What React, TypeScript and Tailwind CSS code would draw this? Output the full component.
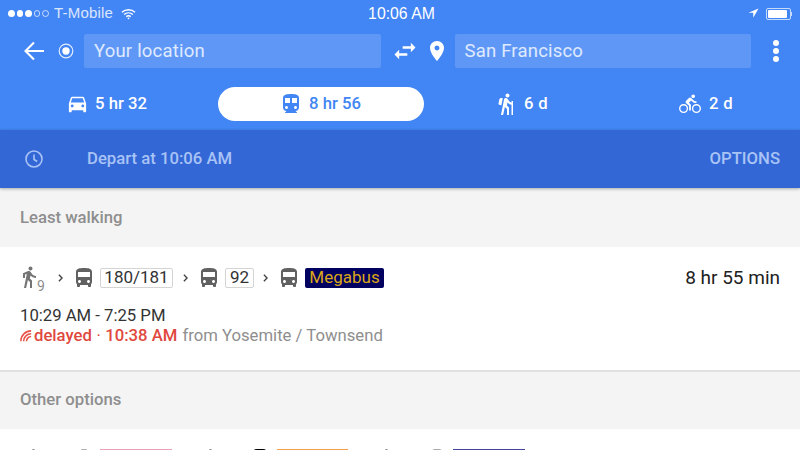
import type { ReactNode } from "react";

const BLUE = "#4285f4";

function Bus({ className = "" }: { className?: string }) {
  return (
    <svg viewBox="0 0 24 24" className={className} fill="currentColor">
      <path d="M4 16c0 .88.39 1.67 1 2.22V20c0 .55.45 1 1 1h1c.55 0 1-.45 1-1v-1h8v1c0 .55.45 1 1 1h1c.55 0 1-.45 1-1v-1.78c.61-.55 1-1.34 1-2.22V6c0-3.5-3.58-4-8-4s-8 .5-8 4v10zm3.5 1c-.83 0-1.5-.67-1.5-1.5S6.67 14 7.5 14s1.5.67 1.5 1.5S8.33 17 7.5 17zm9 0c-.83 0-1.5-.67-1.5-1.5s.67-1.5 1.5-1.5 1.5.67 1.5 1.5-.67 1.5-1.5 1.5zm1.5-6H6V6h12v5z" />
    </svg>
  );
}

function Chevron() {
  return (
    <svg viewBox="0 0 6 10" className="w-[5px] h-[8px] text-[#444]" fill="none" stroke="currentColor" strokeWidth="1.8">
      <path d="M1 1l4 4-4 4" />
    </svg>
  );
}

function Tag({ children, className = "" }: { children: ReactNode; className?: string }) {
  return (
    <span className={`h-[20px] flex items-center justify-center border border-[#d4d4d4] rounded-[2px] text-[17px] text-[#333] ${className}`}>
      {children}
    </span>
  );
}

function Signal() {
  return (
    <div className="flex items-center gap-[2px]">
      {[0, 1, 2].map((i) => (
        <span key={i} className="w-[6.5px] h-[6.5px] rounded-full bg-white" />
      ))}
      {[0, 1].map((i) => (
        <span key={i} className="w-[6.5px] h-[6.5px] rounded-full border border-white/70" />
      ))}
    </div>
  );
}

export default function App() {
  return (
    <div
      className="w-[800px] h-[450px] overflow-hidden bg-[#f4f4f4] flex flex-col"
      style={{ fontFamily: "Roboto, 'Liberation Sans', sans-serif" }}
    >
      <div className="bg-[#4285f4] h-[130px] shrink-0 flex flex-col text-white">
        {/* status bar */}
        <div className="h-[26px] pt-[1px] px-[8px] grid grid-cols-3 items-center text-[15px]" style={{ fontFamily: "'Liberation Sans', sans-serif" }}>
          <div className="flex items-center gap-[5.5px]">
            <Signal />
            <span className="text-white/80 tracking-[0.2px]">T-Mobile</span>
            <svg viewBox="0 0 16 12" className="w-[15px] h-[12px] ml-[2px]" fill="none" stroke="white" strokeWidth="1.5">
              <path d="M1 4.2c4-3.6 10-3.6 14 0M3.3 6.6c2.7-2.4 6.7-2.4 9.4 0M5.6 8.8c1.4-1.2 3.4-1.2 4.8 0" />
              <circle cx="8" cy="10.6" r="1" fill="white" stroke="none" />
            </svg>
          </div>
          <div className="text-center pl-[3px] text-[15.8px]">10:06 AM</div>
          <div className="flex items-center justify-end gap-[7px]">
            <svg viewBox="0 0 12 12" className="w-[11px] h-[11px]" fill="white">
              <path d="M11.5.5L.5 5.3h5.2v5.2z" />
            </svg>
            <div className="flex items-center">
              <div className="w-[25px] h-[12px] rounded-[2px] border border-white/70 p-[1px] flex">
                <div className="w-[19px] bg-white rounded-[1px]" />
              </div>
              <div className="w-[1.5px] h-[4px] bg-white/70" />
            </div>
          </div>
        </div>
        {/* search row */}
        <div className="h-[34px] mt-[8px] flex items-center">
          <svg viewBox="0 0 24 24" className="w-[24px] h-[24px] ml-[22px]" fill="none" stroke="white" strokeWidth="2.1">
            <path d="M22 12H3.5M12 3.5L3.5 12l8.5 8.5" />
          </svg>
          <svg viewBox="0 0 16 16" className="w-[16px] h-[16px] ml-[12px]" fill="none">
            <circle cx="8" cy="8" r="6.8" stroke="white" strokeOpacity="0.85" strokeWidth="1.2" />
            <circle cx="8" cy="8" r="3.7" fill="white" />
          </svg>
          <div className="w-[297px] h-[34px] ml-[10px] bg-[#5e97f6] rounded-[2px] flex items-center pl-[10px] pt-[1px] text-[18.5px] text-white/80 tracking-[0.2px]">
            Your location
          </div>
          <svg viewBox="0 0 24 24" className="w-[28px] h-[28px] ml-[10px]" fill="white">
            <path d="M6.99 11L3 15l3.99 4v-3H14v-2H6.99v-3zM21 9l-3.99-4v3H10v2h7.01v3L21 9z" />
          </svg>
          <svg viewBox="0 0 24 24" className="w-[24px] h-[24px] ml-[6px]" fill="white">
            <path d="M12 2C8.13 2 5 5.13 5 9c0 5.25 7 13 7 13s7-7.75 7-13c0-3.87-3.13-7-7-7zm0 9.5a2.5 2.5 0 0 1 0-5 2.5 2.5 0 0 1 0 5z" />
          </svg>
          <div className="w-[296px] h-[34px] ml-[6px] bg-[#5e97f6] rounded-[2px] flex items-center pl-[9.5px] pt-[1px] text-[18.5px] text-white/80 tracking-[0.2px]">
            San Francisco
          </div>
          <div className="ml-[22px] flex flex-col gap-[2.5px]">
            <span className="w-[5.5px] h-[5.5px] rounded-full bg-white" />
            <span className="w-[5.5px] h-[5.5px] rounded-full bg-white" />
            <span className="w-[5.5px] h-[5.5px] rounded-full bg-white" />
          </div>
        </div>
        {/* modes */}
        <div className="h-[34px] mt-[19px] flex items-center text-[16.7px] font-medium">
          <div className="w-[218px] flex items-center pl-[66px] gap-[6px]">
            <svg viewBox="0 0 24 24" className="w-[23px] h-[23px]" fill="white">
              <path d="M18.92 6.01C18.72 5.42 18.16 5 17.5 5h-11c-.66 0-1.21.42-1.42 1.01L3 12v8c0 .55.45 1 1 1h1c.55 0 1-.45 1-1v-1h12v1c0 .55.45 1 1 1h1c.55 0 1-.45 1-1v-8l-2.08-5.99zM6.5 16c-.83 0-1.5-.67-1.5-1.5S5.67 13 6.5 13s1.5.67 1.5 1.5S7.33 16 6.5 16zm11 0c-.83 0-1.5-.67-1.5-1.5s.67-1.5 1.5-1.5 1.5.67 1.5 1.5-.67 1.5-1.5 1.5zM5 11l1.5-4.5h11L19 11H5z" />
            </svg>
            <span>5 hr 32</span>
          </div>
          <div className="w-[206px] h-[34px] rounded-full bg-white flex items-center justify-center gap-[6px] pr-[2px]" style={{ color: BLUE }}>
            <svg viewBox="0 0 24 24" className="w-[24px] h-[24px]" fill="currentColor">
              <path d="M12 2c-4 0-8 .5-8 4v9.5C4 17.43 5.57 19 7.5 19L6 20.5v.5h12v-.5L16.5 19c1.93 0 3.5-1.57 3.5-3.5V6c0-3.5-3.58-4-8-4zM7.5 17c-.83 0-1.5-.67-1.5-1.5S6.67 14 7.5 14s1.5.67 1.5 1.5S8.33 17 7.5 17zm3.5-6H6V6h5v5zm5.5 6c-.83 0-1.5-.67-1.5-1.5s.67-1.5 1.5-1.5 1.5.67 1.5 1.5-.67 1.5-1.5 1.5zm1.5-6h-5V6h5v5z" />
            </svg>
            <span>8 hr 56</span>
          </div>
          <div className="flex items-center ml-[70px] gap-[6px]">
            <svg viewBox="0 0 24 24" className="w-[24px] h-[24px]" fill="white">
              <path d="M13.5 5.5c1.1 0 2-.9 2-2s-.9-2-2-2-2 .9-2 2 .9 2 2 2zM17.5 10.78c-1.23-.37-2.22-1.17-2.8-2.18l-1-1.6c-.41-.65-1.11-1-1.84-1-.78 0-1.59.5-1.78 1.44S7 23 7 23h2.1l1.8-8 2.1 2v6h2v-7.5l-2.1-2 .6-3c1 1.15 2.41 2.01 4 2.34V23H19V9h-1.5v1.78zM7.43 13.13l-2.12-.41c-.54-.11-.9-.63-.79-1.17l.76-3.93c.21-1.08 1.26-1.79 2.34-1.58l1.16.23-1.35 6.86z" />
            </svg>
            <span className="tracking-[0.3px]">6 d</span>
          </div>
          <div className="flex items-center ml-[131px] gap-[8px]">
            <svg viewBox="0 0 24 24" className="w-[22px] h-[22px]" fill="none">
              <circle cx="5" cy="17" r="4.2" stroke="white" strokeWidth="1.5" />
              <circle cx="19" cy="17" r="4.2" stroke="white" strokeWidth="1.5" />
              <path d="M15.5 5.5c1.1 0 2-.9 2-2s-.9-2-2-2-2 .9-2 2 .9 2 2 2zM10.8 10.5l2.4-2.4.8.8c1.3 1.3 3 2.1 5.1 2.1V9c-1.5 0-2.7-.6-3.6-1.5l-1.9-1.9c-.5-.4-1-.6-1.6-.6s-1.1.2-1.4.6L7.8 8.4c-.4.4-.6.9-.6 1.4 0 .6.2 1.1.6 1.4L11 14v5h2v-6.2z" fill="white" />
            </svg>
            <span className="tracking-[0.3px]">2 d</span>
          </div>
        </div>
      </div>

      {/* depart bar */}
      <div className="h-[58px] shrink-0 bg-[#3367d6] flex items-center text-[16.7px] font-medium text-[#a9c3f5] shadow-[0_1px_3px_rgba(0,0,0,0.3)] relative">
        <svg viewBox="0 0 20 20" className="w-[20px] h-[20px] ml-[24px]" fill="none" stroke="currentColor" strokeWidth="1.6">
          <circle cx="10" cy="10" r="8" />
          <path d="M10 5.5V10.5l3.2 2" />
        </svg>
        <span className="ml-[43px]">Depart at 10:06 AM</span>
        <span className="ml-auto mr-[20px]">OPTIONS</span>
      </div>

      {/* Least walking */}
      <div className="h-[59px] shrink-0 flex items-center pl-[20px] text-[16.7px] font-medium text-[#8e8e8e]">Least walking</div>

      {/* card */}
      <div className="h-[125px] shrink-0 bg-white border-b-2 border-[#e0e0e0] px-[20px] pt-[20px]">
        <div className="flex items-center h-[22px]">
          <div className="flex items-start w-[38px] h-[26px] text-[#757575]">
            <svg viewBox="0 0 24 24" className="w-[24px] h-[24px] -ml-[3px] shrink-0" fill="currentColor">
              <path d="M13.5 5.5c1.1 0 2-.9 2-2s-.9-2-2-2-2 .9-2 2 .9 2 2 2zM9.8 8.9L7 23h2.1l1.8-8 2.1 2v6h2v-7.5l-2.1-2 .6-3C14.8 12 16.8 13 19 13v-2c-1.9 0-3.5-1-4.3-2.4l-1-1.6c-.4-.6-1-1-1.7-1-.3 0-.5.1-.8.1L6 8.3V13h2V9.6l1.8-.7" />
            </svg>
            <span className="text-[14px] leading-none mt-[14px] -ml-[4px] text-[#8e8e8e]">9</span>
          </div>
          <Chevron />
          <Bus className="w-[24px] h-[24px] text-[#616161] ml-[9px]" />
          <Tag className="w-[73px] ml-[4px]">180/181</Tag>
          <div className="ml-[10px]"><Chevron /></div>
          <Bus className="w-[24px] h-[24px] text-[#616161] ml-[9px]" />
          <Tag className="w-[29px] ml-[4px]">92</Tag>
          <div className="ml-[9px]"><Chevron /></div>
          <Bus className="w-[24px] h-[24px] text-[#616161] ml-[9px]" />
          <span className="h-[20px] w-[79px] ml-[4px] flex items-center justify-center bg-[#000060] rounded-[2px] text-[17px] text-[#dba617]">Megabus</span>
          <span className="ml-auto text-[19px] text-[#212121]">8 hr 55 min</span>
        </div>
        <div className="mt-[17px] text-[16.7px] leading-[20px] text-[#333]">10:29 AM - 7:25 PM</div>
        <div className="flex items-center text-[16.7px] leading-[20px]">
          <svg viewBox="0 0 14 14" className="w-[12px] h-[12px] mr-[2px]" fill="none" stroke="#e8534a" strokeWidth="1.8">
            <path d="M1 13C1 6.4 6.4 1 13 1M4.3 13c0-4.8 3.9-8.7 8.7-8.7M7.6 13c0-3 2.4-5.4 5.4-5.4" />
          </svg>
          <span className="font-medium text-[#e0483e]">delayed</span>
          <span className="text-[#e0483e] mx-[4.5px]">·</span>
          <span className="font-medium text-[#e0483e]">10:38 AM</span>
          <span className="ml-[5px] text-[#8e8e8e]">from Yosemite / Townsend</span>
        </div>
      </div>

      {/* Other options */}
      <div className="h-[57px] shrink-0 flex items-center pl-[20px] pb-[1px] text-[16.7px] font-medium text-[#8e8e8e]">Other options</div>

      {/* next card peek */}
      <div className="flex-1 bg-white overflow-hidden">
        <div className="flex items-start h-[20px] mt-[20px] pl-[32px]">
          <span className="w-[3px] h-[3px] bg-[#888] rounded-full" />
          <span className="w-[8px] h-[3px] bg-[#aaa] rounded-t ml-[45px]" />
          <span className="w-[72px] h-[20px] bg-[#e8a0b8] ml-[12px]" />
          <span className="w-[3px] h-[3px] bg-[#888] rounded-full ml-[37px]" />
          <span className="w-[14px] h-[8px] bg-black rounded-full ml-[41px]" />
          <span className="w-[71px] h-[20px] bg-[#f5a04f] ml-[10px]" />
          <span className="w-[3px] h-[3px] bg-[#888] rounded-full ml-[37px]" />
          <span className="w-[10px] h-[3px] bg-[#aaa] rounded-t ml-[44px]" />
          <span className="w-[72px] h-[20px] bg-[#43449a] ml-[11px]" />
        </div>
      </div>
    </div>
  );
}
